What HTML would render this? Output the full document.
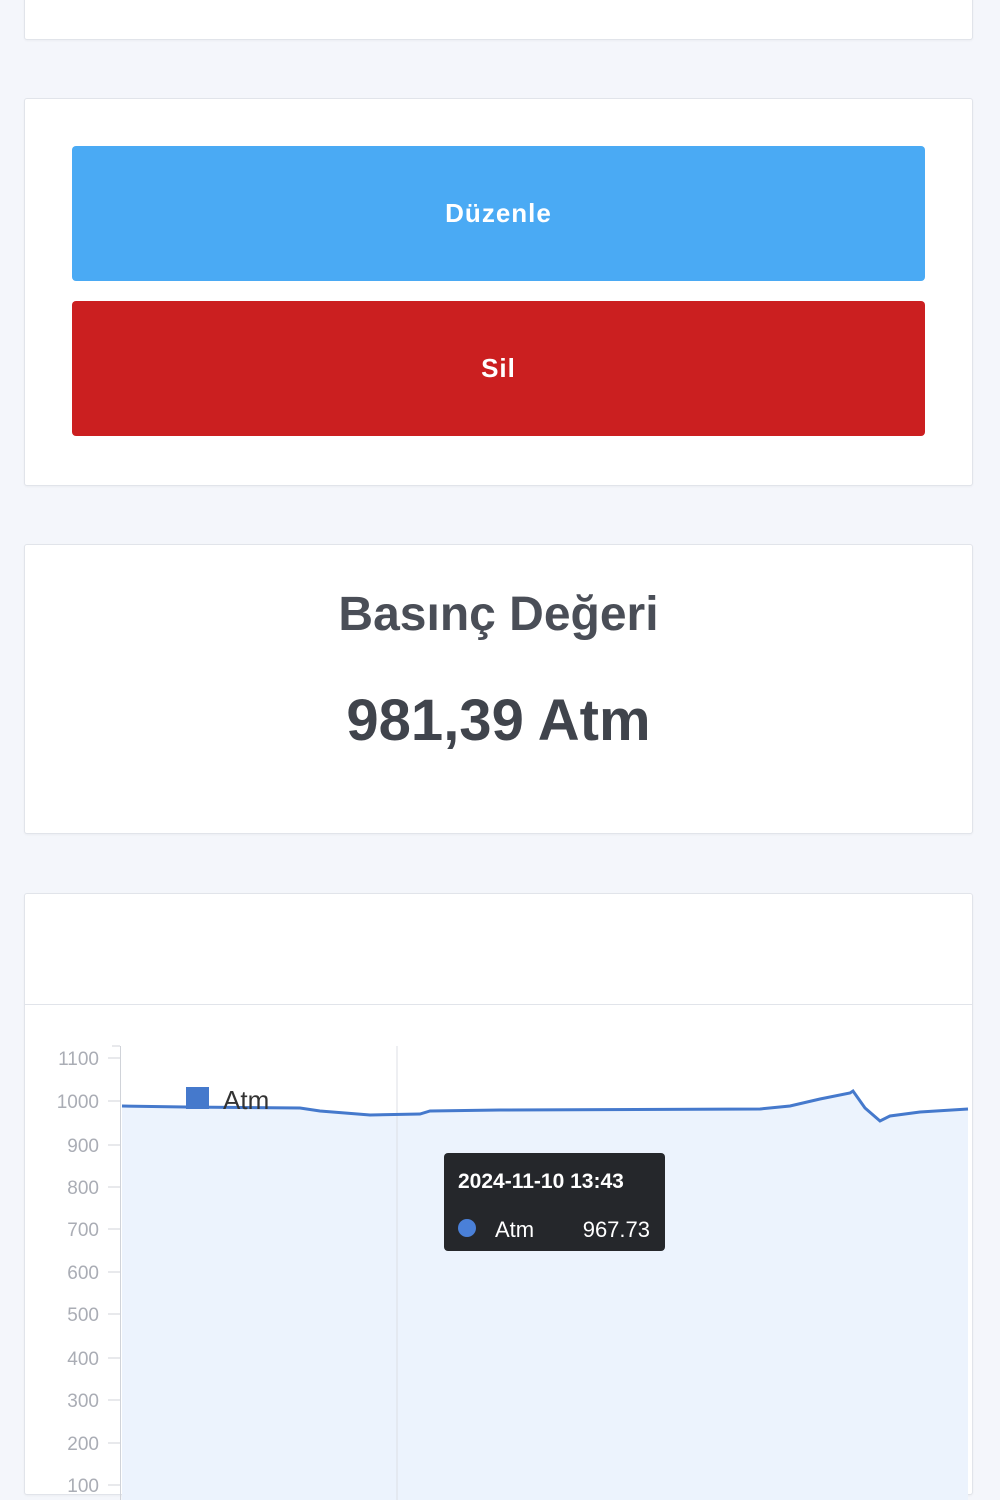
<!DOCTYPE html>
<html style="height:1500px;overflow:hidden"><head><meta charset="utf-8"><style>
body{margin:0;width:1000px;height:1500px;background:#f4f6fb;font-family:"Liberation Sans",sans-serif;position:relative;overflow:hidden}
.card{position:absolute;left:24px;width:947px;background:#fff;border:1px solid #e1e4ea;border-radius:3px;box-shadow:0 1px 2px rgba(0,0,0,.04)}
.btn{position:absolute;left:72px;width:853px;height:135px;border-radius:4px;color:#fff;font-weight:bold;font-size:26px;display:flex;align-items:center;justify-content:center;letter-spacing:1px}
</style></head><body>
<div class="card" style="top:-10px;height:48px"></div>
<div class="card" style="top:98px;height:386px"></div>
<div class="btn" style="top:146px;background:#4aaaf4">Düzenle</div>
<div class="btn" style="top:301px;background:#cb1f20">Sil</div>
<div class="card" style="top:544px;height:288px">
<div style="position:absolute;top:42px;width:100%;text-align:center;font-size:48px;font-weight:bold;color:#4a4e57">Basınç Değeri</div>
<div style="position:absolute;top:142px;width:100%;text-align:center;font-size:58px;font-weight:bold;color:#40444c">981,39 Atm</div>
</div>
<div class="card" style="top:893px;height:600px">
<div style="position:absolute;top:110px;left:0;right:0;border-top:1px solid #e1e4ea"></div>
</div>
<svg width="1000" height="1500" style="position:absolute;left:0;top:0">
<g font-family="Liberation Sans" font-size="19" fill="#aaadb5" text-anchor="end">
<text x="99" y="1065">1100</text><text x="99" y="1108">1000</text><text x="99" y="1152">900</text><text x="99" y="1194">800</text><text x="99" y="1236">700</text><text x="99" y="1279">600</text><text x="99" y="1321">500</text><text x="99" y="1365">400</text><text x="99" y="1407">300</text><text x="99" y="1450">200</text><text x="99" y="1492">100</text>
</g>
<g stroke="#d0d3d9" stroke-width="1">
<line x1="120.5" y1="1046" x2="120.5" y2="1500"/>
<line x1="108" y1="1058" x2="120" y2="1058"/><line x1="108" y1="1101" x2="120" y2="1101"/><line x1="108" y1="1145" x2="120" y2="1145"/><line x1="108" y1="1187" x2="120" y2="1187"/><line x1="108" y1="1229" x2="120" y2="1229"/><line x1="108" y1="1272" x2="120" y2="1272"/><line x1="108" y1="1314" x2="120" y2="1314"/><line x1="108" y1="1358" x2="120" y2="1358"/><line x1="108" y1="1400" x2="120" y2="1400"/><line x1="108" y1="1443" x2="120" y2="1443"/><line x1="108" y1="1485" x2="120" y2="1485"/>
<line x1="112" y1="1046" x2="120" y2="1046"/>
</g>
<path d="M122,1106 L185,1107 L300,1108 L320,1111 L370,1115 L420,1114 L430,1111 L500,1110 L760,1109 L790,1106 L820,1099 L850,1093 L853,1091 L865,1108 L880,1121 L890,1116 L920,1112 L968,1109 L968,1500 L122,1500Z" fill="#ecf3fd"/>
<line x1="397" y1="1046" x2="397" y2="1500" stroke="#dcdfe5"/>
<path d="M122,1106 L185,1107 L300,1108 L320,1111 L370,1115 L420,1114 L430,1111 L500,1110 L760,1109 L790,1106 L820,1099 L850,1093 L853,1091 L865,1108 L880,1121 L890,1116 L920,1112 L968,1109" fill="none" stroke="#4579cc" stroke-width="3"/>
<rect x="186" y="1087" width="23" height="22" fill="#4579cc"/>
<text x="223" y="1109" font-family="Liberation Sans" font-size="26" fill="#333">Atm</text>
<rect x="444" y="1153" width="221" height="98" rx="4" fill="#25272b"/>
<text x="458" y="1188" font-family="Liberation Sans" font-size="21" font-weight="bold" fill="#fff">2024-11-10 13:43</text>
<circle cx="467" cy="1228" r="9" fill="#4a80d8"/>
<text x="495" y="1237" font-family="Liberation Sans" font-size="22" fill="#fff">Atm</text>
<text x="650" y="1237" font-family="Liberation Sans" font-size="22" fill="#fff" text-anchor="end">967.73</text>
</svg>
</body></html>
